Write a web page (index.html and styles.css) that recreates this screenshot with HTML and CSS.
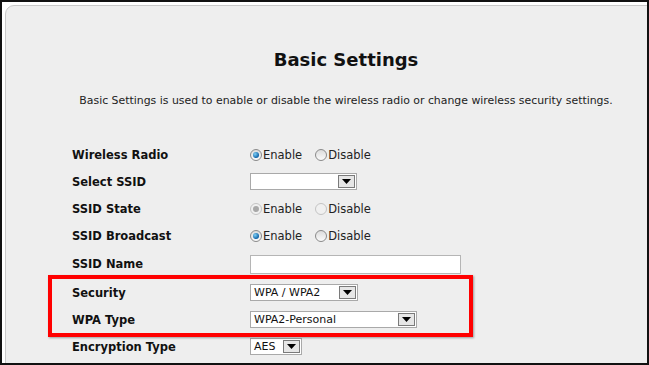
FILE: index.html
```html
<!DOCTYPE html>
<html lang="en">
<head>
    <meta charset="UTF-8">
    <title>Basic Settings</title>
    <link rel="stylesheet" href="styles.css">
</head>
<body>
    <div class="frame">
        <div class="panel">
            <h1>Basic Settings</h1>
            <p class="intro">Basic Settings is used to enable or disable the wireless radio or change wireless security settings.</p>

            <div class="settings">
                <div class="label">Wireless Radio</div>
                <div class="field">
                    <span class="radio checked"></span><span class="opt">Enable</span>
                    <span class="radio"></span><span class="opt">Disable</span>
                </div>

                <div class="label">Select SSID</div>
                <div class="field">
                    <div class="select ssid"><span class="value"></span><span class="arrow"><svg width="9" height="5" viewBox="0 0 9 5"><path d="M0 0h9L4.5 5z" fill="#000"/></svg></span></div>
                </div>

                <div class="label">SSID State</div>
                <div class="field">
                    <span class="radio checked disabled"></span><span class="opt">Enable</span>
                    <span class="radio disabled"></span><span class="opt">Disable</span>
                </div>

                <div class="label">SSID Broadcast</div>
                <div class="field">
                    <span class="radio checked"></span><span class="opt">Enable</span>
                    <span class="radio"></span><span class="opt">Disable</span>
                </div>

                <div class="label">SSID Name</div>
                <div class="field">
                    <input type="text" class="text-input">
                </div>

                <div class="label">Security</div>
                <div class="field">
                    <div class="select security"><span class="value">WPA / WPA2</span><span class="arrow"><svg width="9" height="5" viewBox="0 0 9 5"><path d="M0 0h9L4.5 5z" fill="#000"/></svg></span></div>
                </div>

                <div class="label">WPA Type</div>
                <div class="field">
                    <div class="select wpa"><span class="value">WPA2-Personal</span><span class="arrow"><svg width="9" height="5" viewBox="0 0 9 5"><path d="M0 0h9L4.5 5z" fill="#000"/></svg></span></div>
                </div>

                <div class="label">Encryption Type</div>
                <div class="field">
                    <div class="select aes"><span class="value">AES</span><span class="arrow"><svg width="9" height="5" viewBox="0 0 9 5"><path d="M0 0h9L4.5 5z" fill="#000"/></svg></span></div>
                </div>
            </div>
        </div>
        <!-- annotation -->
        <div class="highlight-box"></div>
    </div>
</body>
</html>
```

FILE: styles.css
```css
body {
    margin: 0;
    font-family: "DejaVu Sans", Verdana, sans-serif;
    color: #111;
}
.frame {
    position: relative;
    width: 649px;
    height: 365px;
    box-sizing: border-box;
    border: 2px solid #111;
    background: #fff;
    padding: 3px 0 0 3px;
    overflow: hidden;
}
.panel {
    width: 680px;
    height: 420px;
    background: #eeeeee;
    border: 1px solid #c9c9c9;
    border-radius: 9px 0 0 0;
}
h1 {
    margin: 42px 0 0;
    font-size: 18px;
    line-height: 24px;
    text-align: center;
    color: #111;
}
.intro {
    margin: 22px 0 0;
    font-size: 10.9px;
    line-height: 14px;
    text-align: center;
    color: #222;
}
.settings {
    display: grid;
    grid-template-columns: 178px 1fr;
    grid-template-rows: repeat(4, 27px) 30px repeat(3, 27px);
    margin: 33px 0 0 66px;
}
.label {
    display: flex;
    align-items: center;
    font-size: 11.5px;
    font-weight: bold;
}
.field {
    display: flex;
    align-items: center;
    font-size: 11.5px;
}
.radio {
    width: 12px;
    height: 12px;
    border: 1px solid #8a8a8a;
    border-radius: 50%;
    background: linear-gradient(#dcdcdc, #fafafa);
    box-sizing: border-box;
    position: relative;
}
.radio.checked::after {
    content: "";
    position: absolute;
    left: 2px;
    top: 2px;
    width: 6px;
    height: 6px;
    border-radius: 50%;
    background: radial-gradient(circle at 35% 35%, #7fd0f5, #1063a8 70%);
}
.radio.disabled {
    border-color: #c4c4c4;
    background: #f0f0f0;
}
.radio.checked.disabled::after {
    background: #a8a8a8;
}
.opt {
    margin: 0 13px 0 1px;
    color: #222;
}
.select {
    display: flex;
    align-items: center;
    height: 17px;
    box-sizing: border-box;
    border: 1px solid #a9a9a9;
    background: #fff;
    padding: 1px;
}
.select .value {
    flex: 1;
    padding-left: 2px;
    font-size: 11px;
    color: #111;
}
.select .arrow {
    display: flex;
    align-items: center;
    justify-content: center;
    width: 17px;
    height: 13px;
    box-sizing: border-box;
    border: 1px solid #7a7a7a;
    background: #e6e6e6;
}
.ssid { width: 107px; }
.security { width: 108px; }
.wpa { width: 167px; }
.aes { width: 52px; }
.text-input {
    width: 211px;
    height: 19px;
    box-sizing: border-box;
    border: 1px solid #b5b5b5;
    background: #fff;
    margin: 0;
    padding: 0;
}
.highlight-box {
    position: absolute;
    left: 46px;
    top: 273px;
    width: 425px;
    height: 62px;
    box-sizing: border-box;
    border: 4px solid #f00;
    box-shadow: 1px 1px 2px rgba(0, 0, 0, 0.35);
}
```
